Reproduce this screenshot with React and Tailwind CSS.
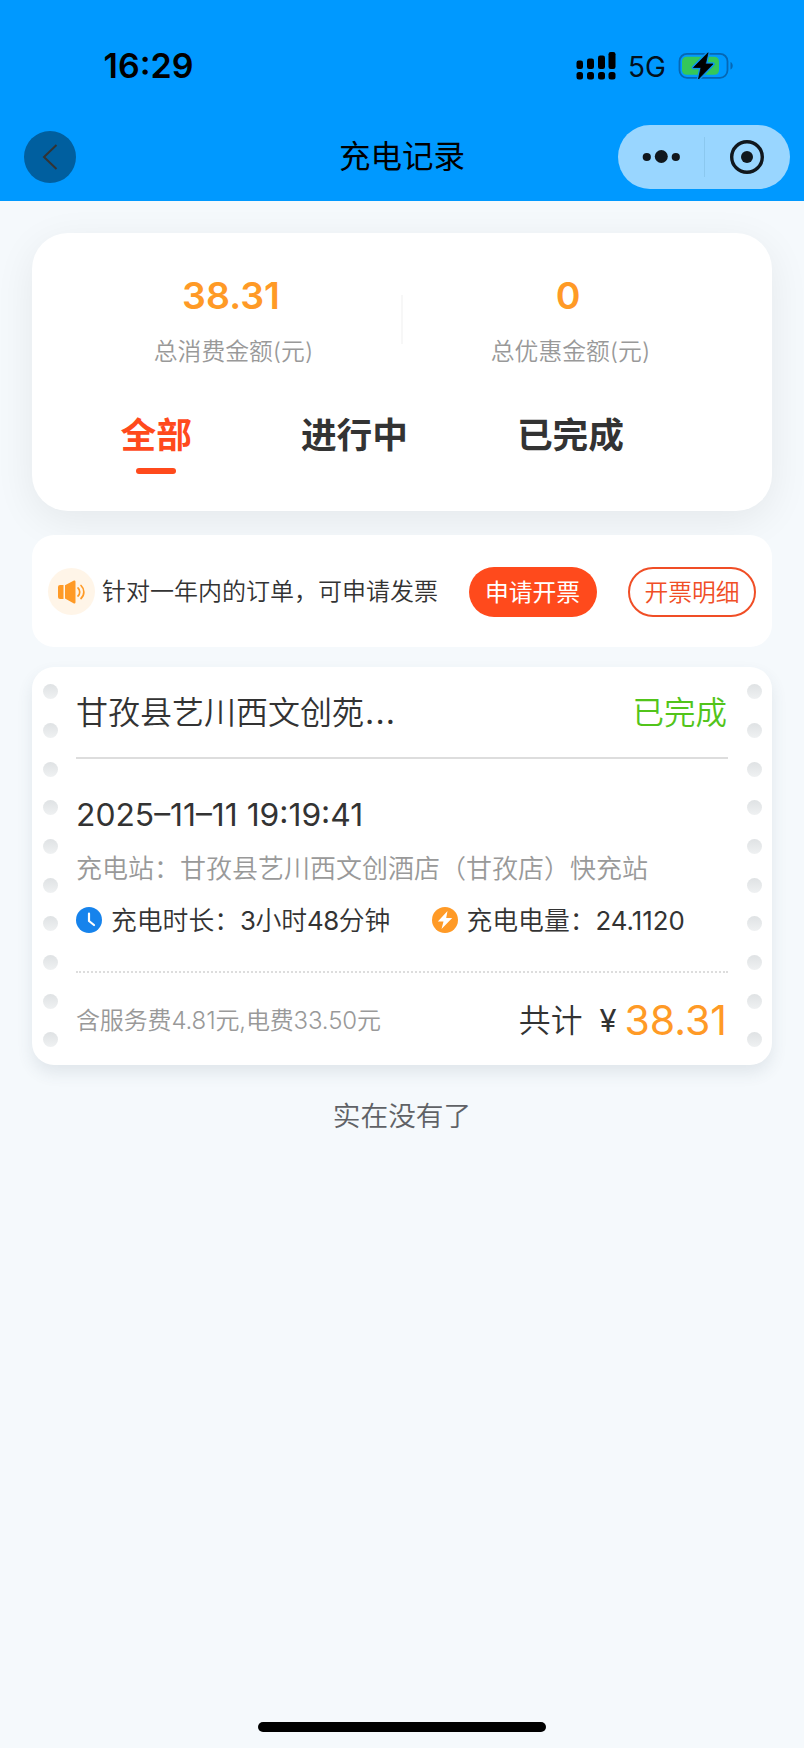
import React from 'react'

const tabs = [
  { name: '全部', active: true, className: 'ml-[88.5px]' },
  { name: '进行中', active: false, className: 'ml-[109px]' },
  { name: '已完成', active: false, className: 'ml-[109px]' },
]

const StatusBar = () => (
  <div className="h-[112px] flex items-start justify-between pl-[103.5px] pr-[70px]">
    <span className="mt-[44px] h-[44px] leading-[44px] text-[34px] font-semibold text-black">16:29</span>
    <div className="flex items-center mt-[44px] h-[44px]">
      <svg width="40" height="28" viewBox="0 0 40 28" fill="#000">
        <rect x="0.5" y="8.5" width="6.5" height="8.5" rx="2.2" />
        <rect x="11" y="6.5" width="7" height="10.5" rx="2.2" />
        <rect x="22" y="3.5" width="7" height="13.5" rx="2.2" />
        <rect x="32.5" y="0" width="7" height="17" rx="2.2" />
        <rect x="0.5" y="20" width="6.5" height="7.5" rx="2.5" />
        <rect x="11" y="20" width="7" height="7.5" rx="2.5" />
        <rect x="22" y="20" width="7" height="7.5" rx="2.5" />
        <rect x="32.5" y="20" width="7" height="7.5" rx="2.5" />
      </svg>
      <span className="ml-[12px] mt-px w-[38px] text-[28px] leading-[44px] text-[#03101c]">5G</span>
      <svg className="ml-[12px]" width="56" height="28" viewBox="0 0 56 28">
        <rect x="1.5" y="1.8" width="48" height="24" rx="7.5" fill="none" stroke="#0567b4" strokeWidth="1.8" />
        <path d="M52.5 10c1.4.5 2.2 2.2 2.2 3.8s-.8 3.3-2.2 3.8z" fill="#0567b4" />
        <rect x="4" y="4.8" width="37" height="18" rx="4.5" fill="#34c759" />
        <path d="M30 .8 15.5 15.5h7.5L20.5 27 35 12h-7.5z" fill="#0a93ee" stroke="#0a93ee" strokeWidth="3.5" strokeLinejoin="round" />
        <path d="M30 .8 15.5 15.5h7.5L20.5 27 35 12h-7.5z" fill="#000" stroke="#000" strokeWidth="0.8" strokeLinejoin="round" />
      </svg>
    </div>
  </div>
)

const NavBar = () => (
  <div className="h-[89px] grid grid-cols-[1fr_auto_1fr] items-start px-[14px]">
    <button className="mt-[18.5px] ml-[10px] w-[52px] h-[52px] rounded-full bg-[#005f9f] flex items-center justify-center">
      <svg width="16" height="28" viewBox="0 0 16 28" fill="none" stroke="#333" strokeWidth="2">
        <path d="M14.5 2 2 14l12.5 12" />
      </svg>
    </button>
    <h1 className="mt-[23px] h-[44px] leading-[44px] text-[31.5px] text-black">充电记录</h1>
    <div className="mt-[13px] ml-auto w-[172px] h-[64px] rounded-full bg-[#99d6ff] flex items-center">
      <div className="w-[86px] flex justify-center">
        <svg width="38" height="14" viewBox="0 0 38 14" fill="#10171d">
          <circle cx="4.8" cy="7" r="4.1" />
          <circle cx="19.3" cy="6.5" r="6.5" />
          <circle cx="33.8" cy="7" r="4.1" />
        </svg>
      </div>
      <div className="w-px h-10 bg-[#8bc8ef]"></div>
      <div className="flex-1 flex justify-center pb-px pr-px">
        <svg width="34" height="34" viewBox="0 0 34 34">
          <circle cx="17" cy="17" r="15.3" fill="none" stroke="#10171d" strokeWidth="3.4" />
          <circle cx="17" cy="17" r="6" fill="#10171d" />
        </svg>
      </div>
    </div>
  </div>
)

const Amount = ({ value, label }) => (
  <div className="flex-1 flex flex-col items-center">
    <span className="mr-[5px] h-[44px] leading-[44px] text-[37.5px] font-semibold text-[#ff9a26]">{value}</span>
    <span className="mt-[17px] h-[34px] leading-[34px] text-[23.8px] font-[350] text-[#999]">{label}</span>
  </div>
)

const Summary = () => (
  <div className="h-[278px] rounded-[36px] bg-white pt-[41px] shadow-[0_10px_40px_rgba(0,0,0,0.07)]">
    <div className="flex pl-[34px]">
      <Amount value="38.31" label="总消费金额(元)" />
      <div className="w-[2px] h-[49px] mt-[21px] bg-[#f7f7f7]"></div>
      <Amount value="0" label="总优惠金额(元)" />
      <div className="w-[34px]"></div>
    </div>
    <div className="flex mt-[41px]">
      {tabs.map((tab) => (
        <div key={tab.name} className={`flex flex-col items-center ${tab.className}`}>
          <span className={`h-[50px] leading-[50px] text-[35.7px] font-semibold ${tab.active ? 'text-[#ff4a1c]' : 'text-[#333]'}`}>{tab.name}</span>
          {tab.active && <span className="mt-[8px] w-10 h-[6px] rounded-full bg-[#ff4a1c]"></span>}
        </div>
      ))}
    </div>
  </div>
)

const Invoice = () => (
  <div className="mt-6 h-[112px] rounded-[22px] bg-white flex items-center px-4 pt-px">
    <span className="w-[47px] h-[47px] rounded-full bg-[#fff5e8] flex items-center justify-center">
      <svg width="28" height="24" viewBox="0 0 28 24" fill="#ff9a26">
        <path d="M2 5h3.5v14H2a2 2 0 0 1-2-2V7a2 2 0 0 1 2-2z" />
        <path d="M7 5.2 15.5.8c1-.6 2 0 2 1v20.4c0 1-1 1.6-2 1L7 18.600z" />
        <path d="M20 8c2.300 2 2.300 6 0 8M23 5.500c3.800 3.600 3.800 9.500 0 13" fill="none" stroke="#ff9a26" strokeWidth="1.7" strokeLinecap="round" />
      </svg>
    </span>
    <span className="ml-[7px] text-[24px] font-[350] text-[#333] whitespace-nowrap">针对一年内的订单，可申请发票</span>
    <button className="ml-auto w-[128px] h-[50px] rounded-full bg-[#ff4a1c] text-white text-[23.8px] pt-[3px]">申请开票</button>
    <button className="ml-[31.5px] w-[128px] h-[50px] rounded-full border-2 border-[#f04e26] text-[#f04e26] text-[23.8px] font-[350] pt-[3px]">开票明细</button>
  </div>
)

const Holes = () => (
  <div className="w-[15px] flex flex-col gap-[23.7px] pt-[17.2px]">
    {Array.from({ length: 10 }).map((_, i) => (
      <span key={i} className="w-[15px] h-[15px] shrink-0 rounded-full bg-linear-to-b from-[#dfe2e4] to-[#eff1f2]"></span>
    ))}
  </div>
)

const Order = () => (
  <div className="mt-5 h-[398px] rounded-[22px] bg-white flex px-[10.5px] shadow-[0_8px_16px_rgba(60,80,100,0.11)]">
    <Holes />
    <div className="flex-1 mx-[18.5px]">
      <div className="h-[92px] pt-[23px] flex justify-between border-b-2 border-[#ddd]">
        <span className="h-[46px] leading-[46px] text-[32px] font-[350] text-[#333]">甘孜县艺川西文创苑<span className="ml-px tracking-[1.2px] font-normal">...</span></span>
        <span className="mr-px h-[46px] leading-[46px] text-[31.5px] font-[350] text-[#52c41a]">已完成</span>
      </div>
      <p className="mt-[33px] h-[46px] leading-[46px] text-[31.8px] text-[#333]">2025–11–11 19:19:41</p>
      <p className="mt-[12px] h-[38px] leading-[38px] text-[26px] font-[350] text-[#999] whitespace-nowrap">充电站：甘孜县艺川西文创酒店（甘孜店）快充站</p>
      <div className="mt-[13px] h-[38px] flex items-center text-[25.8px] font-[350] text-[#333] whitespace-nowrap">
        <svg width="26" height="26" viewBox="0 0 26 26">
          <circle cx="13" cy="13" r="13" fill="#1683ec" />
          <path d="M13 6.5v7.500l5 4" fill="none" stroke="#fff" strokeWidth="2.2" strokeLinecap="round" strokeLinejoin="round" />
        </svg>
        <span className="ml-[9px] mt-px w-[321px] leading-[38px]">充电时长：<span className="font-normal -tracking-[0.5px]">3</span>小时<span className="font-normal -tracking-[0.5px]">48</span>分钟</span>
        <svg width="26" height="26" viewBox="0 0 26 26">
          <circle cx="13" cy="13" r="13" fill="#ff9a26" />
          <path d="M15.5 4 5.8 14.500h5.700L9.500 22l10.700-11h-6z" fill="#fff" />
        </svg>
        <span className="ml-[8.5px] mt-px leading-[38px]">充电电量：<span className="font-normal">24.1120</span></span>
      </div>
      <div className="mt-[32px] border-t-2 border-dotted border-[#ddd]"></div>
      <div className="mt-[20px] h-[56px] flex items-center">
        <span className="text-[24px] -tracking-[0.15px] font-[350] text-[#999] whitespace-nowrap">含服务费4.81元,电费33.50元</span>
        <span className="ml-auto text-[31.8px] font-[350] text-[#333]">共计</span>
        <span className="ml-[17px] text-[31px] text-[#333]">¥</span>
        <span className="ml-[8px] mr-px text-[41px] text-[#ff9a26]">38.31</span>
      </div>
    </div>
    <Holes />
  </div>
)

const App = () => {
  return (
    <div className="w-[804px] h-[1748px] flex flex-col overflow-hidden bg-[#f5f9fc] font-['Inter','Noto_Sans_CJK_SC',sans-serif]">
      <header className="h-[201px] shrink-0 bg-[#0099ff]">
        <StatusBar />
        <NavBar />
      </header>
      <main className="px-8 pt-8 flex-1">
        <Summary />
        <Invoice />
        <Order />
        <p className="mt-[32px] h-[38px] leading-[38px] text-center text-[27.7px] font-[350] text-[#606266]">实在没有了</p>
      </main>
      <div className="w-[288px] h-[10px] mx-auto mb-[16px] shrink-0 rounded-full bg-black"></div>
    </div>
  )
}

export default App
